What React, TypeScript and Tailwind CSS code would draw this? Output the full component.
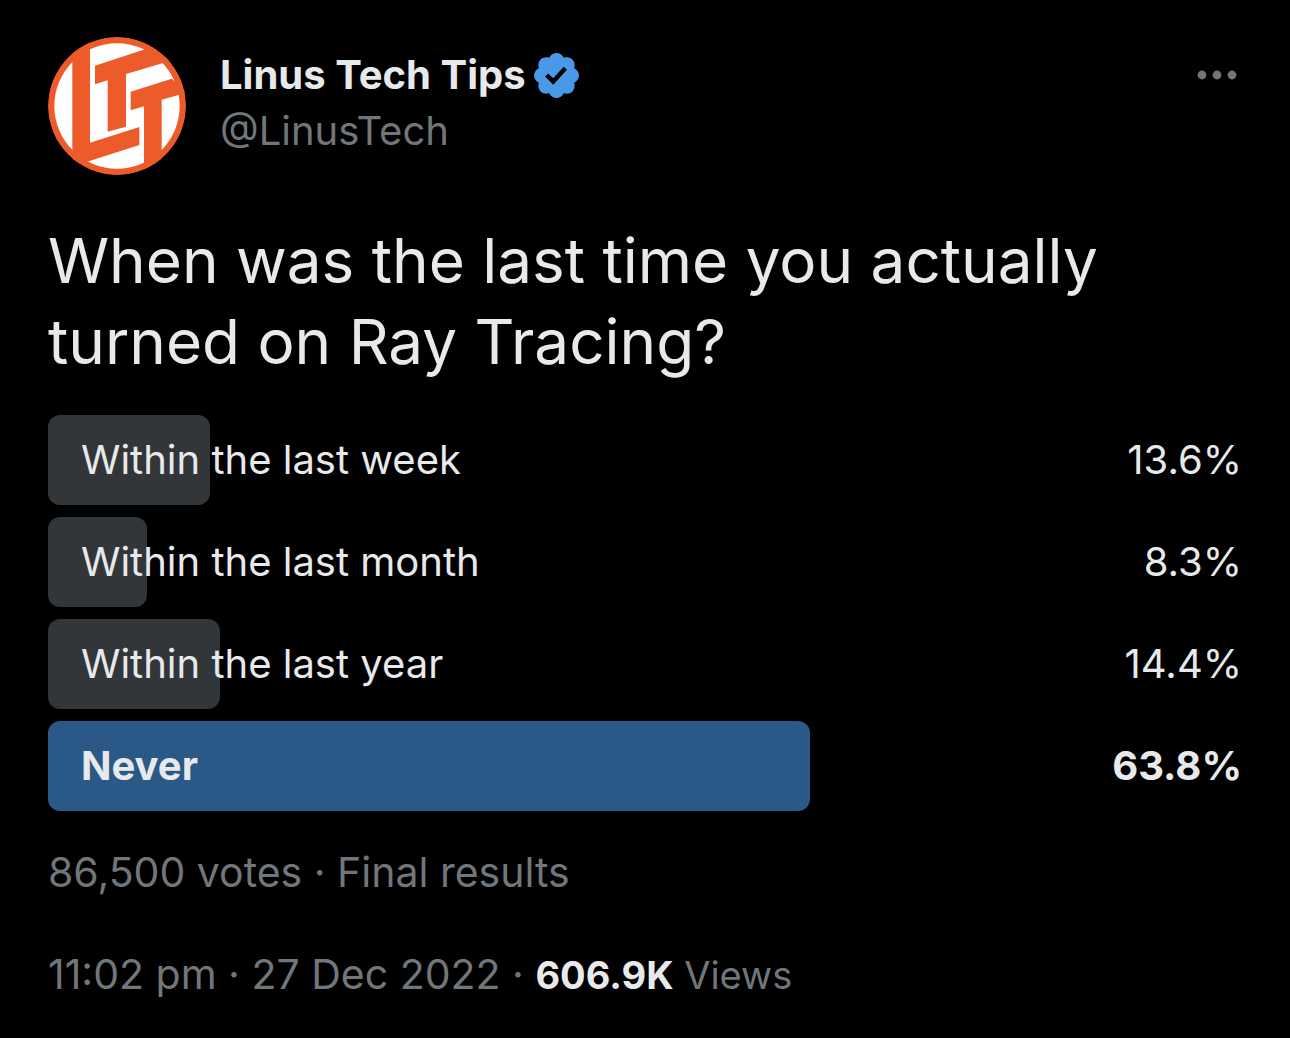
type PollOption = {
  label: string;
  pct: number;
};

const OPTIONS: PollOption[] = [
  { label: "Within the last week", pct: 13.6 },
  { label: "Within the last month", pct: 8.3 },
  { label: "Within the last year", pct: 14.4 },
  { label: "Never", pct: 63.8 },
];

const TOP_PCT = Math.max(...OPTIONS.map((o) => o.pct));

export default function App() {
  return (
    <article className="min-h-screen bg-black px-12 pt-[37px] pb-9 font-['Inter',sans-serif] text-[40px] leading-[56px] text-[#e7e9ea]">
      <header className="flex items-start">
        <Avatar />
        <div className="ml-[34px] pt-2.5">
          <div className="flex items-center gap-2">
            <h1 className="font-bold">Linus Tech Tips</h1>
            <VerifiedBadge />
          </div>
          <p className="text-[#71767b]">@LinusTech</p>
        </div>
        <button type="button" aria-label="More" className="mt-[27px] mr-[5px] ml-auto">
          <svg viewBox="0 0 40 22" className="h-[22px] w-10 fill-[#71767b]" aria-hidden="true">
            <circle cx="5" cy="11" r="4.4" />
            <circle cx="20" cy="11" r="4.4" />
            <circle cx="35" cy="11" r="4.4" />
          </svg>
        </button>
      </header>

      <p className="mt-[45px] max-w-[1120px] text-[62px] leading-[81px]">
        When was the last time you actually turned on Ray Tracing?
      </p>

      <ul className="mt-[33px] flex flex-col gap-3">
        {OPTIONS.map((option) => (
          <PollRow key={option.label} option={option} winner={option.pct === TOP_PCT} />
        ))}
      </ul>

      <div className="mt-[33px] flex flex-col gap-[46px] text-[41px] text-[#71767b]">
        <p>86,500 votes · Final results</p>
        <p>
          11:02 pm · 27 Dec 2022 ·{" "}
          <span className="text-[38px]">
            <span className="font-bold text-[#e7e9ea]">606.9K</span> Views
          </span>
        </p>
      </div>
    </article>
  );
}

function PollRow({ option, winner }: { option: PollOption; winner: boolean }) {
  return (
    <li
      className={
        winner
          ? "relative flex h-[90px] items-center justify-between pl-[33px] font-bold"
          : "relative flex h-[90px] items-center justify-between pl-[33px]"
      }
    >
      <div
        className={
          winner
            ? "absolute inset-y-0 left-0 rounded-xl bg-[#2a5887]"
            : "absolute inset-y-0 left-0 rounded-xl bg-[#333639]"
        }
        style={{ width: `${option.pct}%` }}
      />
      <span className="relative">{option.label}</span>
      <span className="relative">{option.pct}%</span>
    </li>
  );
}

function Avatar() {
  return (
    <svg viewBox="24 21 414 414" className="size-[138px] shrink-0" role="img" aria-label="Linus Tech Tips">
      <defs>
        <clipPath id="avatar-disc">
          <circle cx="231" cy="228" r="207" />
        </clipPath>
      </defs>
      <g clipPath="url(#avatar-disc)">
        <circle cx="231" cy="228" r="207" fill="#ec5b29" />
        <circle cx="231" cy="228" r="188" fill="#fff" />
        <g fill="#ec5b29">
          <path d="M97 20H150V338L298 291V345L146 394L97 400Z" />
          <path d="M165 107L315 58L400 90L372 98L258 132V290L203 305V151L165 163Z" />
          <path d="M272 185L395 146L440 187L418 194L365 209V430H312V229L272 241Z" />
        </g>
      </g>
    </svg>
  );
}

function VerifiedBadge() {
  return (
    <svg
      viewBox="1.75 1.75 20.5 20.5"
      className="size-[45px] fill-[#4a99e9]"
      role="img"
      aria-label="Verified account"
    >
      <path d="M22.25 12c0-1.43-.88-2.67-2.19-3.34.46-1.39.2-2.9-.81-3.91s-2.52-1.27-3.91-.81c-.66-1.31-1.91-2.19-3.34-2.19s-2.67.88-3.33 2.19c-1.4-.46-2.91-.2-3.92.81s-1.26 2.52-.8 3.91c-1.31.67-2.2 1.91-2.2 3.34s.89 2.67 2.2 3.34c-.46 1.39-.21 2.9.8 3.91s2.52 1.26 3.91.81c.67 1.31 1.91 2.19 3.34 2.19s2.68-.88 3.34-2.19c1.39.45 2.9.2 3.91-.81s1.27-2.52.81-3.91c1.31-.67 2.19-1.91 2.19-3.34zm-11.71 4.2L6.8 12.46l1.41-1.42 2.26 2.26 4.8-5.23 1.47 1.36-6.2 6.77z" />
    </svg>
  );
}
